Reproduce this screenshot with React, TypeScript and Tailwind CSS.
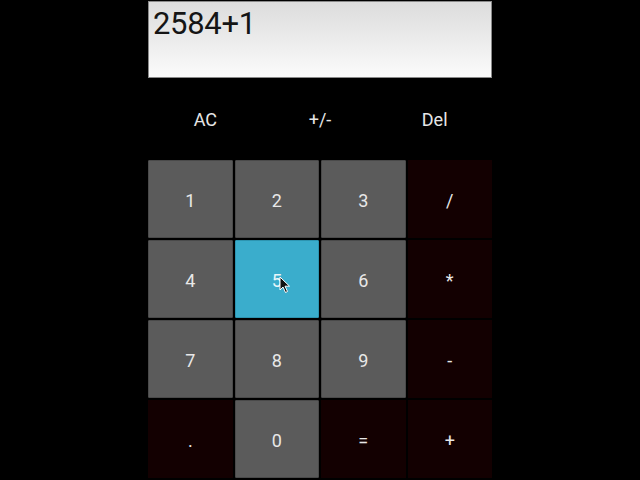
import React from "react";

type Key = { label: string; kind: "num" | "op" | "active" };

const keys: Key[] = [
  { label: "1", kind: "num" },
  { label: "2", kind: "num" },
  { label: "3", kind: "num" },
  { label: "/", kind: "op" },
  { label: "4", kind: "num" },
  { label: "5", kind: "active" },
  { label: "6", kind: "num" },
  { label: "*", kind: "op" },
  { label: "7", kind: "num" },
  { label: "8", kind: "num" },
  { label: "9", kind: "num" },
  { label: "-", kind: "op" },
  { label: ".", kind: "op" },
  { label: "0", kind: "num" },
  { label: "=", kind: "op" },
  { label: "+", kind: "op" },
];

function Cursor() {
  return (
    <svg
      className="absolute left-[43px] top-[35px]"
      width="12"
      height="18"
      viewBox="0 0 12 18"
    >
      <path
        d="M1 1 L1 14 L4 11 L6.5 16.5 L8.5 15.5 L6 10.2 L10.5 10.2 Z"
        fill="#111"
        stroke="#fff"
        strokeWidth="1"
        strokeLinejoin="round"
      />
    </svg>
  );
}

export default function App() {
  return (
    <div
      className="w-[640px] h-[480px] bg-black flex justify-center overflow-hidden"
      style={{ fontFamily: "Roboto, 'Noto Sans', sans-serif" }}
    >
      <div className="w-[344px] flex flex-col">
        {/* display */}
        <div className="mt-px h-[77px] border border-[#8a8a8a] bg-gradient-to-b from-[#dcdcdc] to-[#fbfbfb] px-[4px]">
          <div className="text-[31px] leading-[44px] tracking-[-0.3px] text-[#151515]">2584+1</div>
        </div>

        {/* top actions */}
        <div className="h-[82px] grid grid-cols-3 items-center text-[18px] text-[#e6e6e6]">
          <div className="text-center">AC</div>
          <div className="text-center">+/-</div>
          <div className="text-center">Del</div>
        </div>

        {/* keypad */}
        <div className="grid grid-cols-4 grid-rows-[repeat(4,78px)] gap-[2px]">
          {keys.map((k) => (
            <div
              key={k.label}
              className={
                k.kind === "num"
                  ? "relative flex items-center justify-center pt-[2px] bg-[#5b5b5b] border border-[#4a4a4a] rounded-[1px] text-[18px] text-[#e8e8e8]"
                  : k.kind === "active"
                  ? "relative flex items-center justify-center pt-[2px] bg-[#3aadcc] border border-[#2d94b0] rounded-[1px] text-[18px] text-[#e8f6fa]"
                  : "relative flex items-center justify-center pt-[2px] bg-[#130001] text-[18px] text-[#e8e8e8]"
              }
            >
              {k.label}
              {k.kind === "active" && <Cursor />}
            </div>
          ))}
        </div>
      </div>
    </div>
  );
}
